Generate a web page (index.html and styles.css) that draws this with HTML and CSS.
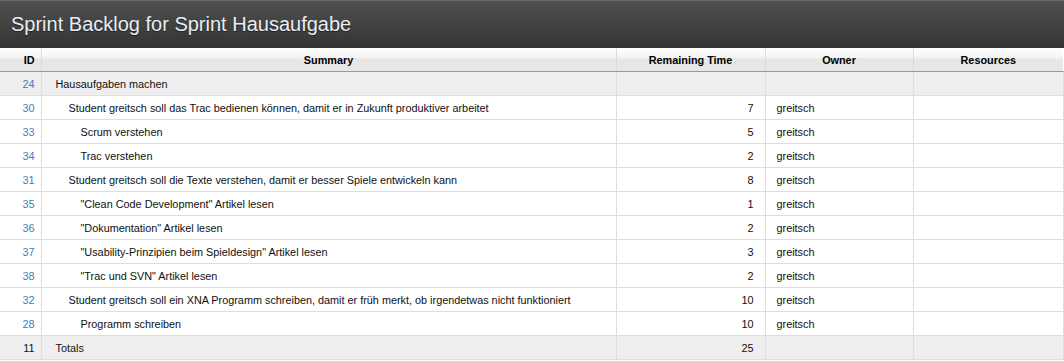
FILE: index.html
```html
<!DOCTYPE html>
<html lang="de">
<head>
    <meta charset="UTF-8">
    <title>Sprint Backlog</title>
    <link rel="stylesheet" href="styles.css">
</head>
<body>
    <div class="title-bar">
        <h1>Sprint Backlog for Sprint Hausaufgabe</h1>
    </div>

    <table class="backlog">
        <colgroup>
            <col class="col-id">
            <col class="col-summary">
            <col class="col-time">
            <col class="col-owner">
            <col class="col-res">
        </colgroup>
        <thead>
            <tr>
                <th class="id">ID</th>
                <th>Summary</th>
                <th>Remaining Time</th>
                <th>Owner</th>
                <th>Resources</th>
            </tr>
        </thead>
        <tbody>
            <tr class="parent">
                <td class="id"><a href="#">24</a></td>
                <td class="summary lvl-0">Hausaufgaben machen</td>
                <td class="time"></td>
                <td class="owner"></td>
                <td></td>
            </tr>
            <tr>
                <td class="id"><a href="#">30</a></td>
                <td class="summary lvl-1">Student greitsch soll das Trac bedienen können, damit er in Zukunft produktiver arbeitet</td>
                <td class="time">7</td>
                <td class="owner">greitsch</td>
                <td></td>
            </tr>
            <tr>
                <td class="id"><a href="#">33</a></td>
                <td class="summary lvl-2">Scrum verstehen</td>
                <td class="time">5</td>
                <td class="owner">greitsch</td>
                <td></td>
            </tr>
            <tr>
                <td class="id"><a href="#">34</a></td>
                <td class="summary lvl-2">Trac verstehen</td>
                <td class="time">2</td>
                <td class="owner">greitsch</td>
                <td></td>
            </tr>
            <tr>
                <td class="id"><a href="#">31</a></td>
                <td class="summary lvl-1">Student greitsch soll die Texte verstehen, damit er besser Spiele entwickeln kann</td>
                <td class="time">8</td>
                <td class="owner">greitsch</td>
                <td></td>
            </tr>
            <tr>
                <td class="id"><a href="#">35</a></td>
                <td class="summary lvl-2">"Clean Code Development" Artikel lesen</td>
                <td class="time">1</td>
                <td class="owner">greitsch</td>
                <td></td>
            </tr>
            <tr>
                <td class="id"><a href="#">36</a></td>
                <td class="summary lvl-2">"Dokumentation" Artikel lesen</td>
                <td class="time">2</td>
                <td class="owner">greitsch</td>
                <td></td>
            </tr>
            <tr>
                <td class="id"><a href="#">37</a></td>
                <td class="summary lvl-2">"Usability-Prinzipien beim Spieldesign" Artikel lesen</td>
                <td class="time">3</td>
                <td class="owner">greitsch</td>
                <td></td>
            </tr>
            <tr>
                <td class="id"><a href="#">38</a></td>
                <td class="summary lvl-2">"Trac und SVN" Artikel lesen</td>
                <td class="time">2</td>
                <td class="owner">greitsch</td>
                <td></td>
            </tr>
            <tr>
                <td class="id"><a href="#">32</a></td>
                <td class="summary lvl-1">Student greitsch soll ein XNA Programm schreiben, damit er früh merkt, ob irgendetwas nicht funktioniert</td>
                <td class="time">10</td>
                <td class="owner">greitsch</td>
                <td></td>
            </tr>
            <tr>
                <td class="id"><a href="#">28</a></td>
                <td class="summary lvl-2">Programm schreiben</td>
                <td class="time">10</td>
                <td class="owner">greitsch</td>
                <td></td>
            </tr>
            <tr class="totals">
                <td class="id">11</td>
                <td class="summary lvl-0">Totals</td>
                <td class="time">25</td>
                <td class="owner"></td>
                <td></td>
            </tr>
        </tbody>
    </table>
</body>
</html>
```

FILE: styles.css
```css
body {
    margin: 0;
    padding: 0;
    background-color: #fff;
    font-family: "Liberation Sans", Arial, sans-serif;
    font-size: 10.85px;
    color: #111;
}
.title-bar {
    height: 47px;
    border-top: 1px solid #6a6a6a;
    background: linear-gradient(#505050, #343434);
    display: flex;
    align-items: center;
    padding-left: 11px;
}
.title-bar h1 {
    margin: 0 0 1px;
    font-size: 20px;
    font-weight: normal;
    color: #e9eef4;
    text-shadow: 0 1px 1px rgba(0, 0, 0, 0.5);
}
.backlog {
    width: 1063px;
    border-collapse: collapse;
    table-layout: fixed;
}
.col-id { width: 41px; }
.col-summary { width: 575px; }
.col-time { width: 149px; }
.col-owner { width: 148px; }
.col-res { width: 150px; }

.backlog th {
    height: 23px;
    padding: 0;
    font-weight: bold;
    color: #000;
    text-align: center;
    background: linear-gradient(#fefefe 0%, #f3f3f3 45%, #e7e7e7 46%, #e7e7e7 100%);
    border-left: 1px solid #dcdcdc;
    border-bottom: 1px solid #999;
}
.backlog th.id {
    text-align: right;
    padding-right: 6px;
    border-left: none;
}
.backlog td {
    height: 23px;
    padding: 0;
    border: 1px solid #dedede;
    border-top: none;
    white-space: nowrap;
}
.backlog td:first-child {
    border-left: none;
}
.backlog td.id {
    text-align: right;
    padding-right: 6px;
}
.backlog td.id a {
    color: #3b7dc2;
    text-decoration: none;
}
.summary.lvl-0 { padding-left: 14px; }
.summary.lvl-1 { padding-left: 27px; }
.summary.lvl-2 { padding-left: 39px; }
.backlog td.time {
    text-align: right;
    padding-right: 11px;
}
.backlog td.owner {
    padding-left: 11px;
}
.parent td,
.totals td {
    background-color: #efefef;
}
```
